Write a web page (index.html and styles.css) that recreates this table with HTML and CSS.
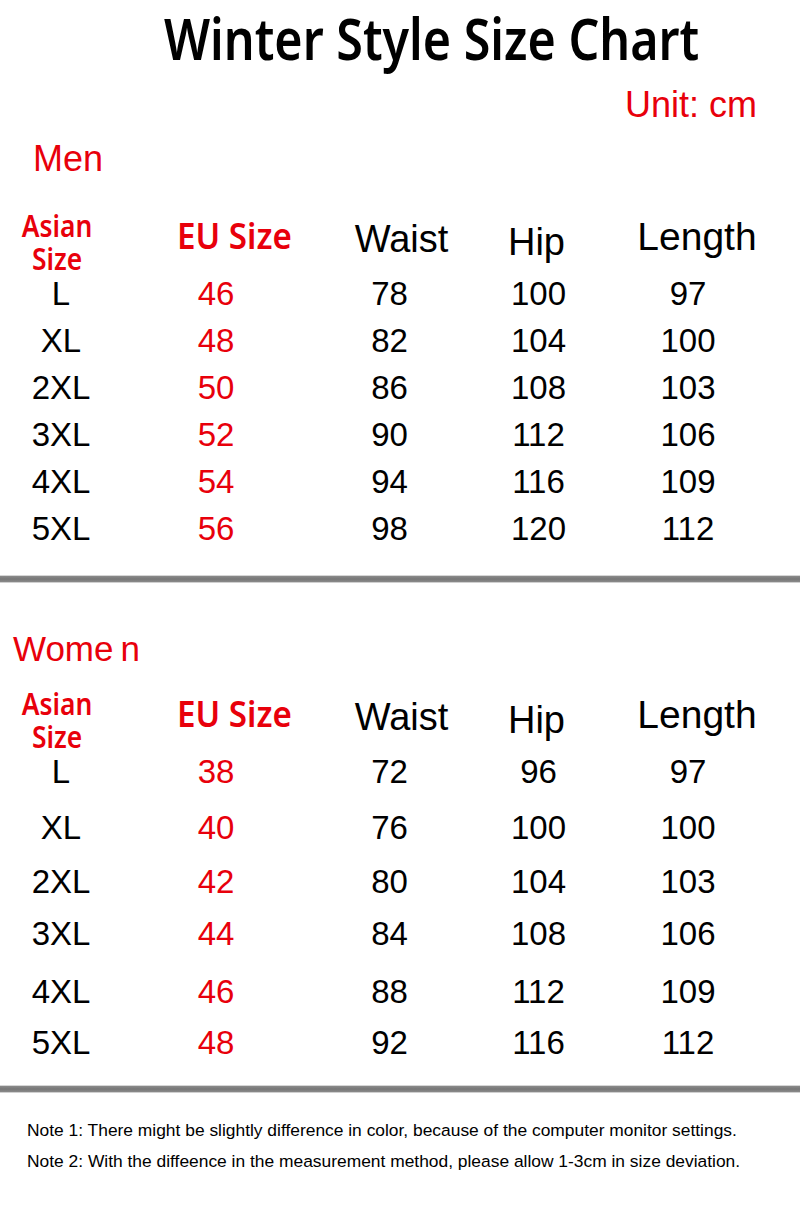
FILE: index.html
```html
<!DOCTYPE html>
<html lang="en">
<head>
<meta charset="utf-8">
<title>Winter Style Size Chart</title>
<link rel="stylesheet" href="styles.css">
</head>
<body>
<div class="page">
  <div class="title-wrap"><h1 class="title">Winter Style Size Chart</h1></div>
  <div class="unit">Unit: cm</div>

  <section class="chart chart-men">
    <div class="label">Men</div>
    <div class="row head">
      <div class="c h-asian"><span class="narrow">Asian<br>Size</span></div>
      <div class="c h-eu"><span class="narrow-eu">EU Size</span></div>
      <div class="c h-waist">Waist</div>
      <div class="c h-hip">Hip</div>
      <div class="c h-length">Length</div>
    </div>
    <div class="row data"><div class="c">L</div><div class="c red">46</div><div class="c">78</div><div class="c">100</div><div class="c">97</div></div>
    <div class="row data"><div class="c">XL</div><div class="c red">48</div><div class="c">82</div><div class="c">104</div><div class="c">100</div></div>
    <div class="row data"><div class="c">2XL</div><div class="c red">50</div><div class="c">86</div><div class="c">108</div><div class="c">103</div></div>
    <div class="row data"><div class="c">3XL</div><div class="c red">52</div><div class="c">90</div><div class="c">112</div><div class="c">106</div></div>
    <div class="row data"><div class="c">4XL</div><div class="c red">54</div><div class="c">94</div><div class="c">116</div><div class="c">109</div></div>
    <div class="row data"><div class="c">5XL</div><div class="c red">56</div><div class="c">98</div><div class="c">120</div><div class="c">112</div></div>
  </section>

  <div class="sep sep-men"></div>

  <section class="chart chart-women">
    <div class="label">Wome<span class="gap">n</span></div>
    <div class="row head">
      <div class="c h-asian"><span class="narrow">Asian<br>Size</span></div>
      <div class="c h-eu"><span class="narrow-eu">EU Size</span></div>
      <div class="c h-waist">Waist</div>
      <div class="c h-hip">Hip</div>
      <div class="c h-length">Length</div>
    </div>
    <div class="row data"><div class="c">L</div><div class="c red">38</div><div class="c">72</div><div class="c">96</div><div class="c">97</div></div>
    <div class="row data"><div class="c">XL</div><div class="c red">40</div><div class="c">76</div><div class="c">100</div><div class="c">100</div></div>
    <div class="row data"><div class="c">2XL</div><div class="c red">42</div><div class="c">80</div><div class="c">104</div><div class="c">103</div></div>
    <div class="row data"><div class="c">3XL</div><div class="c red">44</div><div class="c">84</div><div class="c">108</div><div class="c">106</div></div>
    <div class="row data"><div class="c">4XL</div><div class="c red">46</div><div class="c">88</div><div class="c">112</div><div class="c">109</div></div>
    <div class="row data"><div class="c">5XL</div><div class="c red">48</div><div class="c">92</div><div class="c">116</div><div class="c">112</div></div>
  </section>

  <div class="sep sep-women"></div>

  <div class="notes">
    <p>Note 1: There might be slightly difference in color, because of the computer monitor settings.</p>
    <p>Note 2: With the diffeence in the measurement method, please allow 1-3cm in size deviation.</p>
  </div>
</div>
</body>
</html>
```

FILE: styles.css
```css
html, body {
  margin: 0;
  padding: 0;
  background: #ffffff;
}

.page {
  width: 800px;
  min-height: 1209px;
  background: #ffffff;
  color: #000000;
  font-family: "Liberation Sans", Arial, sans-serif;
}

.title-wrap {
  margin-top: 5px;
  padding-left: 63px;
  text-align: center;
}

.title {
  display: inline-block;
  margin: 0;
  font-family: "Noto Sans", "Open Sans", sans-serif;
  font-weight: 600;
  font-size: 58px;
  line-height: 66px;
  color: #000;
  transform: scaleX(0.835);
}

.unit {
  margin-top: 14px;
  padding-right: 43px;
  text-align: right;
  font-size: 36px;
  line-height: 40px;
  color: #e8000b;
}

.label {
  margin-top: 14px;
  padding-left: 33px;
  font-size: 36px;
  line-height: 40px;
  color: #e8000b;
}

.chart-women .label {
  margin-top: 46px;
  margin-bottom: -12px;
  padding-left: 13px;
  font-size: 35px;
}

.gap {
  margin-left: 7px;
}

.row {
  display: grid;
  grid-template-columns: 122px 188px 159px 139px 160px;
}

.c {
  text-align: center;
  white-space: nowrap;
}

.red {
  color: #e8000b;
}

.head {
  height: 91px;
  align-items: start;
}

.h-asian {
  padding-top: 30px;
  padding-right: 8px;
  font-family: "Noto Sans", "Open Sans", sans-serif;
  font-weight: 600;
  font-size: 30px;
  line-height: 33px;
  color: #e8000b;
}

.narrow {
  display: inline-block;
  transform: scaleX(0.88);
}

.h-eu {
  padding-top: 37px;
  padding-left: 36px;
  font-family: "Noto Sans", "Open Sans", sans-serif;
  font-weight: 600;
  font-size: 36px;
  line-height: 40px;
  color: #e8000b;
}

.narrow-eu {
  display: inline-block;
  transform: scaleX(0.92);
}

.h-waist,
.h-hip,
.h-length {
  font-size: 38px;
  line-height: 44px;
}

.h-waist {
  padding-top: 38px;
  padding-left: 24px;
}

.h-hip {
  padding-top: 41px;
  padding-right: 4px;
}

.h-length {
  padding-top: 36px;
  padding-left: 18px;
  font-size: 39px;
}

.data {
  height: 47px;
  align-items: center;
  font-size: 33px;
  line-height: 47px;
}

.chart-women .data:nth-of-type(4) { margin-top: 9px; }
.chart-women .data:nth-of-type(5) { margin-top: 7px; }
.chart-women .data:nth-of-type(6) { margin-top: 5px; }
.chart-women .data:nth-of-type(7) { margin-top: 11px; }
.chart-women .data:nth-of-type(8) { margin-top: 4px; }

.sep {
  height: 8px;
  background: linear-gradient(#d6d6d6 0, #d6d6d6 1px, #8a8a8a 1px, #777777 4px, #8a8a8a 7px, #d0d0d0 7px, #d0d0d0 8px);
}

.sep-men {
  margin-top: 23px;
}

.sep-women {
  margin-top: 19px;
}

.notes {
  margin-top: 22px;
  padding-left: 27px;
  font-size: 17.4px;
  line-height: 31px;
}

.notes p {
  margin: 0;
}
```
